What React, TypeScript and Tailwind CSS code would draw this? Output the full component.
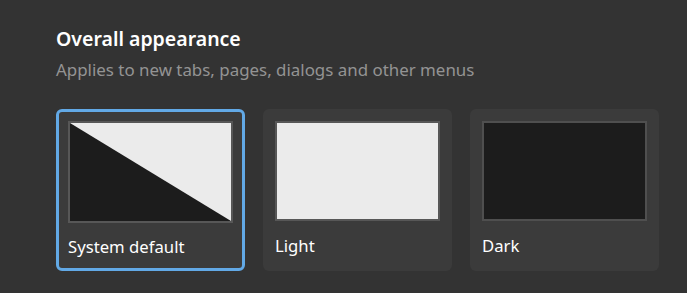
import { useState } from 'react'

type Mode = 'system' | 'light' | 'dark'

const options: { id: Mode; label: string }[] = [
  { id: 'system', label: 'System default' },
  { id: 'light', label: 'Light' },
  { id: 'dark', label: 'Dark' },
]

function Preview({ mode }: { mode: Mode }) {
  if (mode === 'system') {
    return (
      <div className="h-[102px] w-full border-2 border-[#575757] bg-[#ebebeb]">
        <svg className="block h-full w-full" viewBox="0 0 100 100" preserveAspectRatio="none">
          <polygon points="0,0 100,100 0,100" fill="#1c1c1c" />
        </svg>
      </div>
    )
  }
  return (
    <div
      className={
        mode === 'light'
          ? 'h-[102px] w-full border-2 border-[#575757] bg-[#ebebeb]'
          : 'h-[102px] w-full border-2 border-[#4f4f4f] bg-[#1c1c1c]'
      }
    />
  )
}

export default function App() {
  const [mode, setMode] = useState<Mode>('system')

  return (
    <div
      className="h-[293px] w-full bg-[#333333] pl-[56px] pt-[26px]"
      style={{ fontFamily: '"Segoe UI", "Noto Sans", "Open Sans", sans-serif' }}
    >
      <h2 className="text-[19.5px] font-semibold leading-[26px] text-white">Overall appearance</h2>
      <p className="mt-[7px] text-[16.9px] leading-[22px] text-[#939393]">
        Applies to new tabs, pages, dialogs and other menus
      </p>

      <div className="mt-[28px] flex gap-[18px]">
        {options.map((o) => (
          <button
            key={o.id}
            onClick={() => setMode(o.id)}
            className={
              mode === o.id
                ? 'flex h-[162px] w-[189px] flex-col rounded-[6px] border-[3px] border-[#62a9e6] bg-[#3b3b3b] px-[9px] pt-[9px] text-left'
                : 'flex h-[162px] w-[189px] flex-col rounded-[6px] border-[3px] border-transparent bg-[#3b3b3b] px-[9px] pt-[9px] text-left'
            }
          >
            <Preview mode={o.id} />
            <div className="flex h-[48px] items-center pt-[3px] text-[16.7px] text-white">{o.label}</div>
          </button>
        ))}
      </div>
    </div>
  )
}
